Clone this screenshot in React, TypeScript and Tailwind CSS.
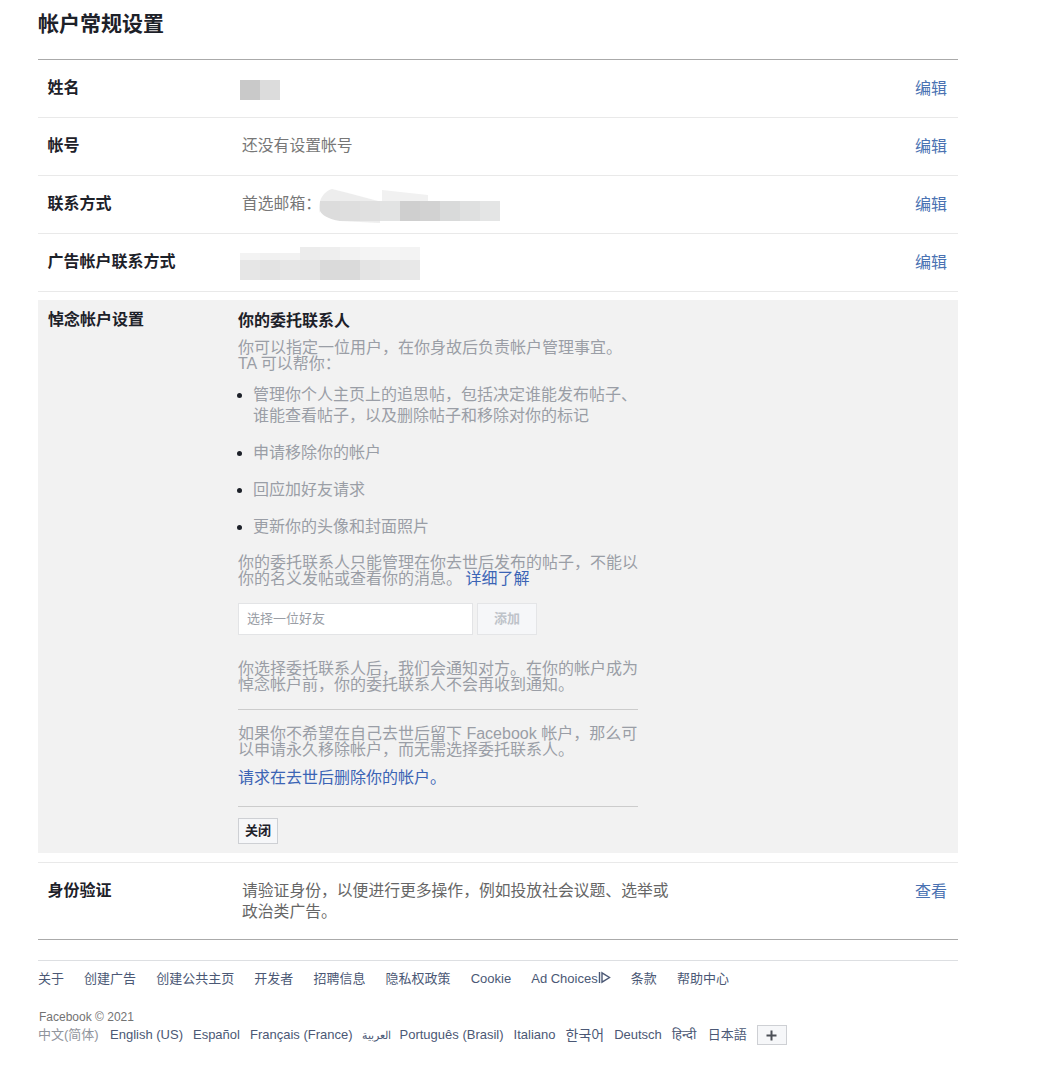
const font = `font-['Liberation_Sans','Noto_Sans_CJK_SC',sans-serif]`;

const Edit = ({ label = "编辑" }: { label?: string }) => (
  <a className="mr-[11px] mt-[1px] text-[16px] leading-[20px] text-[#4a72b2]">{label}</a>
);

const Row = ({ label, children }: { label: string; children?: React.ReactNode }) => (
  <div className="flex h-[58px] items-center border-b border-[#e9e9e9]">
    <div className="w-[202px] shrink-0 pb-[2px] pl-[9.5px] text-[16px] font-bold leading-[20px] text-[#1d2129]">{label}</div>
    <div className="flex flex-1 items-center text-[15.8px] leading-[20px] text-[#777]">{children}</div>
    <Edit />
  </div>
);

// blurred-out personal data in the screenshot
const NameBlur = () => (
  <svg width="40" height="20" className="mt-[2px] block">
    <rect x="0" y="0" width="20" height="20" fill="#c9c9c9" />
    <rect x="20" y="0" width="20" height="20" fill="#dcdcdc" />
  </svg>
);

const emailCells = ["#dcdcdc", "#dedede", "#e0e0e0", "#e2e3e3", "#cfcfcf", "#d2d2d2", "#d9dada", "#dfe0e0", "#e4e5e5"];
const EmailBlur = () => (
  <svg width="182" height="36" className="-my-[8px] ml-[8px] block">
    <path d="M2 26 C0 18 2 6 14 2 L30 6 L60 14 L62 14 L62 36 L22 34 C10 33 3 30 2 26Z" fill="#e6e6e6" opacity="0.7" />
    <path d="M64 3 L110 8 L110 16 L64 16Z" fill="#f1f1f1" />
    {emailCells.map((c, i) => (
      <rect key={i} x={2 + i * 20} y="14" width="20" height="20" fill={c} />
    ))}
    <path d="M2 14 L2 24 C4 28 10 32 22 34 L2 34Z" fill="#fff" />
  </svg>
);

const adCellsTop = ["#f3f3f3", "#f1f1f1", "#f2f2f2", "#ececec", "#eeeeee", "#f2f2f2", "#f4f4f4", "#f5f5f5", "#f3f3f3"];
const adCellsBottom = ["#e6e6e6", "#e3e3e3", "#e6e6e6", "#e5e5e5", "#dadada", "#dadada", "#e4e4e4", "#e7e7e7", "#e8e8e8"];
const AdBlur = () => (
  <svg width="180" height="34" className="-my-[8px] block">
    {adCellsTop.map((c, i) => (
      <rect key={i} x={i * 20} y={i < 3 ? 7 : 1} width="20" height={i < 3 ? 7 : 13} fill={c} />
    ))}
    {adCellsBottom.map((c, i) => (
      <rect key={i} x={i * 20} y="14" width="20" height="20" fill={c} />
    ))}
  </svg>
);

const AdChoicesIcon = () => (
  <svg width="13" height="13" viewBox="0 0 13 13" className="inline-block align-[-1px]" fill="none" stroke="#4b5875" strokeWidth="1.4">
    <path d="M1.5 1 V12" />
    <path d="M4 1.8 L11.5 6.5 L4 11.2 Z" />
  </svg>
);

const bullets = [
  <>管理你个人主页上的追思帖，包括决定谁能发布帖子、<br />谁能查看帖子，以及删除帖子和移除对你的标记</>,
  "申请移除你的帐户",
  "回应加好友请求",
  "更新你的头像和封面照片",
];

const footerLinks = ["关于", "创建广告", "创建公共主页", "开发者", "招聘信息", "隐私权政策", "Cookie"];

export default function App() {
  return (
    <div className={`${font} min-h-[1092px] w-[1037px] bg-white pl-[38px] pt-[10px]`}>
      <div className="w-[920px]">
        <h1 className="h-[49px] text-[21px] font-bold leading-[28px] text-[#1d2129]">帐户常规设置</h1>

        <div className="border-t border-[#aaaaaa]">
          <Row label="姓名"><NameBlur /></Row>
          <Row label="帐号"><span className="mb-[2px] ml-[2px]">还没有设置帐号</span></Row>
          <Row label="联系方式"><span className="mb-[2px] ml-[2px]">首选邮箱：</span><div className="-ml-[11px]"><EmailBlur /></div></Row>
          <Row label="广告帐户联系方式"><AdBlur /></Row>
        </div>

        <div className="mt-[8px] flex h-[553px] bg-[#f2f2f2] pt-[11px]">
          <div className="-mt-[1px] w-[200px] shrink-0 pl-[10px] text-[16px] font-bold leading-[20px] text-[#1d2129]">悼念帐户设置</div>
          <div className="w-[400px] text-[16px] leading-[16px] text-[#9a9ea6]">
            <h2 className="text-[16px] font-bold leading-[20px] text-[#1d2129]">你的委托联系人</h2>
            <p className="mt-[9px]">你可以指定一位用户，在你身故后负责帐户管理事宜。<br />TA 可以帮你：</p>

            <ul className="mt-[12px] list-disc pl-[15px] leading-[21px] marker:text-[#1d2129]">
              {bullets.map((b, i) => (
                <li key={i} className="mb-[16px]">{b}</li>
              ))}
            </ul>

            <p className="mt-[18px]">你的委托联系人只能管理在你去世后发布的帖子，不能以<br />你的名义发帖或查看你的消息。 <a className="-ml-[1px] text-[#3b64b5]">详细了解</a></p>

            <div className="mt-[16px] flex gap-[4px]">
              <div className="flex h-[32px] w-[235px] items-center border border-[#e3e4e6] bg-white pl-[8px] text-[13px] text-[#9a9ea6]">选择一位好友</div>
              <div className="flex h-[32px] w-[60px] items-center justify-center border border-[#e4e5e7] bg-[#f6f7f9] text-[13px] font-bold text-[#bec3c9]">添加</div>
            </div>

            <p className="mt-[26px]">你选择委托联系人后，我们会通知对方。在你的帐户成为<br />悼念帐户前，你的委托联系人不会再收到通知。</p>
            <div className="mt-[16px] border-t border-[#cccccc]" />
            <p className="mt-[16px]">如果你不希望在自己去世后留下 Facebook 帐户，那么可<br />以申请永久移除帐户，而无需选择委托联系人。</p>
            <p className="mt-[12px] leading-[16px] text-[#3b64b5]">请求在去世后删除你的帐户。</p>
            <div className="mt-[20px] border-t border-[#cccccc]" />
            <button className="mt-[11px] block h-[26px] w-[40px] border border-[#ced0d4] bg-[#f6f7f9] text-[13px] font-bold leading-[24px] text-[#1d2129]">关闭</button>
          </div>
        </div>

        <div className="mt-[9px] flex h-[78px] border-y border-t-[#e9e9e9] border-b-[#aaaaaa] pt-[15px]">
          <div className="w-[204px] shrink-0 pl-[9.5px] text-[16px] font-bold leading-[26px] text-[#1d2129]">身份验证</div>
          <div className="mt-[2px] w-[440px] text-[15.8px] leading-[21px] text-[#666]">请验证身份，以便进行更多操作，例如投放社会议题、选举或政治类广告。</div>
          <div className="ml-auto pt-[1px] leading-[26px]"><Edit label="查看" /></div>
        </div>

        <div className="mt-[20px] border-t border-[#dddfe2]">
          <div className="mt-[10px] flex gap-[20.1px] text-[13px] leading-[16px] text-[#4b5875]">
            {footerLinks.map((l) => (
              <a key={l}>{l}</a>
            ))}
            <a>Ad Choices<AdChoicesIcon /></a>
            <a>条款</a>
            <a>帮助中心</a>
          </div>
          <div className="mt-[23px] pl-[1px] text-[12px] leading-[14px] text-[#737373]">Facebook © 2021</div>
          <div className="mt-[1px] flex items-center gap-[10px] text-[13px] leading-[20px] text-[#4b5875]">
            <span className="w-[62px] text-[#90949c]">中文(简体)</span>
            <a>English (US)</a>
            <a>Español</a>
            <a>Français (France)</a>
            <a className="-ml-[1px] w-[28px] whitespace-nowrap text-[11px]">العربية</a>
            <a>Português (Brasil)</a>
            <a>Italiano</a>
            <a className="text-[14px]">한국어</a>
            <a>Deutsch</a>
            <a className="w-[26px]">हिन्दी</a>
            <a>日本語</a>
            <button className="flex h-[20px] w-[30px] items-center justify-center border border-[#ced0d4] bg-[#f6f7f9]">
              <svg width="11" height="11" viewBox="0 0 11 11" fill="none" stroke="#4b4f56" strokeWidth="2"><path d="M5.5 0.5 V10.5 M0.5 5.5 H10.5" /></svg>
            </button>
          </div>
        </div>
      </div>
    </div>
  );
}
